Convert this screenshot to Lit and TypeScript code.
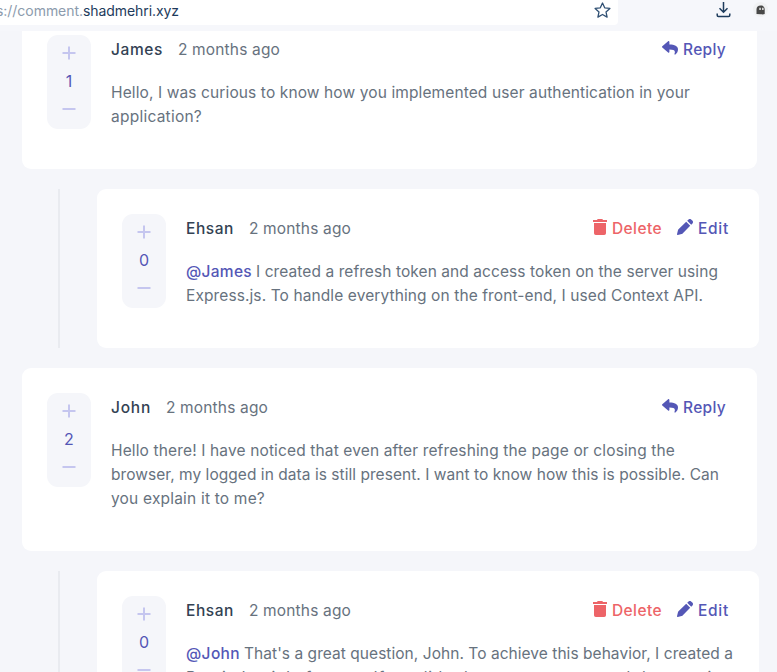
import { LitElement, html, css, svg, nothing } from "lit";
import { customElement, property, state, query } from "lit/decorators.js";

interface Line {
  text: string;
  width: number;
  mention?: string;
  mentionWidth?: number;
}

interface Comment {
  author: string;
  authorWidth: number;
  votes: number;
  own: boolean;
  lines: Line[];
}

const comments: Comment[] = [
  {
    author: "James",
    authorWidth: 52,
    votes: 1,
    own: false,
    lines: [
      { text: "Hello, I was curious to know how you implemented user authentication in your", width: 579 },
      { text: "application?", width: 91 },
    ],
  },
  {
    author: "Ehsan",
    authorWidth: 48,
    votes: 0,
    own: true,
    lines: [
      {
        mention: "@James",
        mentionWidth: 66,
        text: "I created a refresh token and access token on the server using",
        width: 462,
      },
      { text: "Express.js. To handle everything on the front-end, I used Context API.", width: 517 },
    ],
  },
  {
    author: "John",
    authorWidth: 40,
    votes: 2,
    own: false,
    lines: [
      { text: "Hello there! I have noticed that even after refreshing the page or closing the", width: 564 },
      { text: "browser, my logged in data is still present. I want to know how this is possible. Can", width: 608 },
      { text: "you explain it to me?", width: 154 },
    ],
  },
  {
    author: "Ehsan",
    authorWidth: 48,
    votes: 0,
    own: true,
    lines: [
      {
        mention: "@John",
        mentionWidth: 54,
        text: "That's a great question, John. To achieve this behavior, I created a",
        width: 489,
      },
      { text: "PersistLogin's feature. If a valid token was present and the user is", width: 535 },
    ],
  },
];

/** A run of text whose tracking is set so that it fills a given measure. */
@customElement("tracked-text")
export class TrackedText extends LitElement {
  static styles = css`
    :host {
      display: inline-block;
      white-space: nowrap;
    }
  `;
  @property() text = "";
  @property({ type: Number }) measure = 0;
  @state() private tracking = 0;
  @query("span") private run!: HTMLSpanElement;

  firstUpdated() {
    const natural = this.run.getBoundingClientRect().width;
    this.tracking = (this.measure - natural) / this.text.length;
  }

  render() {
    return html`<span style="letter-spacing:${this.tracking}px">${this.text}</span>`;
  }
}

const tracked = (text: string, measure: number) =>
  html`<tracked-text .text=${text} .measure=${measure}></tracked-text>`;

const replyIcon = html`<svg class="icon" width="16" height="14" viewBox="0 0 16 14">
  <path fill="currentColor" d="M.3 5.3 6.1.3c.5-.4 1.3-.1 1.3.6v2.6c5.2.1 8.6 1.4 8.6 5.1 0 2.2-1.2 3.9-2.6 4.9-.5.4-1.1-.1-.9-.7 1.3-3.6-.7-4.3-5.1-4.4v2.5c0 .7-.8 1-1.3.6L.3 6.5a.8.8 0 0 1 0-1.2Z"/>
</svg>`;

const deleteIcon = html`<svg class="icon" width="14" height="16" viewBox="0 0 14 16">
  <path fill="currentColor" d="M4.7 0h4.600l.7 1H14v2H0V1h4ZM1 4h12v10.200a1.800 1.800 0 0 1-1.800 1.800H2.800A1.800 1.800 0 0 1 1 14.200Z"/>
</svg>`;

const editIcon = html`<svg class="icon" width="16" height="16" viewBox="0 0 16 16">
  <path fill="currentColor" d="m9.200 2.800 4 4-7.600 7.600c-.3.300-.6.500-1 .6l-3.800.9c-.5.200-.9-.2-.8-.7l.9-3.800c.1-.4.3-.8.6-1.100ZM10.200 1.800l1.100-1.100a2.200 2.200 0 0 1 3.100 0l.9.9a2.200 2.200 0 0 1 0 3.100l-1.100 1.100Z"/>
</svg>`;

@customElement("comment-card")
export class CommentCard extends LitElement {
  static styles = css`
    :host {
      display: flex;
      box-sizing: border-box;
      gap: 20px;
      padding: 25px 25px 40px;
      border-radius: 9px;
      background: #fff;
      align-items: flex-start;
    }
    .votes {
      flex: none;
      width: 44px;
      height: 94px;
      border-radius: 11px;
      background: #f5f6fa;
      color: #5457b6;
      display: flex;
      flex-direction: column;
      align-items: center;
      box-sizing: border-box;
      padding-top: 11px;
    }
    .votes svg {
      display: block;
      fill: #c5c6ef;
    }
    .count {
      height: 42px;
      line-height: 43px;
      font-size: 16px;
    }
    .body {
      flex: 1;
      min-width: 0;
      padding-top: 1px;
    }
    .head {
      display: flex;
      align-items: center;
      height: 28px;
      margin-bottom: 17px;
      margin-right: 5px;
    }
    .name {
      font-weight: 500;
      color: #334253;
      margin-right: 15px;
    }
    .when {
      margin-right: auto;
    }
    .action {
      display: flex;
      align-items: center;
      color: #5457b6;
      font-weight: 500;
    }
    .danger {
      color: #ed6468;
      margin-right: 15px;
    }
    .reply {
      margin-right: 1px;
    }
    .icon {
      display: block;
      margin-right: 5px;
      margin-top: -4px;
    }
    .line {
      white-space: nowrap;
      height: 24px;
      display: flex;
      gap: 4px;
    }
    .mention {
      color: #5457b6;
      font-weight: 500;
    }
  `;
  @property({ attribute: false }) comment!: Comment;

  private action(label: string, width: number, icon: unknown, variant = "") {
    return html`<div class="action ${variant}">${icon}${tracked(label, width)}</div>`;
  }

  render() {
    const c = this.comment;
    return html`
      <div class="votes">
        <svg width="14" height="14" viewBox="0 0 14 14">
          ${svg`<path d="M6 .5h2V6h5.500v2H8v5.500H6V8H.5V6H6Z"/>`}
        </svg>
        <div class="count">${c.votes}</div>
        <svg width="14" height="14" viewBox="0 0 14 14"><path d="M.5 6h13v2H.5Z" /></svg>
      </div>
      <div class="body">
        <div class="head">
          <div class="name">${tracked(c.author, c.authorWidth)}</div>
          <div class="when">${tracked("2 months ago", 102)}</div>
          ${c.own
            ? [this.action("Delete", 50, deleteIcon, "danger"), this.action("Edit", 31, editIcon)]
            : this.action("Reply", 43, replyIcon, "reply")}
        </div>
        ${c.lines.map(
          (l) => html`<div class="line">
            ${l.mention
              ? html`<span class="mention">${tracked(l.mention, l.mentionWidth ?? 0)}</span>`
              : nothing}${tracked(l.text, l.width)}
          </div>`
        )}
      </div>
    `;
  }
}

@customElement("app-root")
export class AppRoot extends LitElement {
  static styles = css`
    :host {
      display: flex;
      flex-direction: column;
      width: 777px;
      height: 672px;
      overflow: hidden;
      background: #f5f6fa;
      color: #67727e;
      font: 15.5px/24px Inter, sans-serif;
    }
    .toolbar {
      flex: none;
      height: 31px;
      display: flex;
      background: #f6f7fb;
      color: #1d3b5c;
    }
    .address {
      width: 618px;
      height: 25px;
      box-sizing: border-box;
      padding-right: 7px;
      background: #fff;
      border-bottom-right-radius: 4px;
      display: flex;
      justify-content: space-between;
      overflow: hidden;
      font: 14px/21px Inter, sans-serif;
    }
    .url {
      display: flex;
      margin-left: -4px;
    }
    .dim {
      color: #8c9bad;
    }
    .star {
      margin-top: 2px;
    }
    .download {
      margin: 2px 0 0 98px;
    }
    .ghost {
      margin: 2px 0 0 21px;
    }
    .page {
      flex: 1;
      min-height: 0;
      overflow: hidden;
      padding: 0 18px 0 22px;
    }
    .thread {
      display: flex;
      flex-direction: column;
      gap: 20px;
      margin-top: -21px;
    }
    .top {
      width: 735px;
    }
    .nested {
      display: flex;
      margin-left: 36px;
      width: 701px;
      box-sizing: border-box;
      border-left: 2px solid #e9ebf0;
      padding-left: 37px;
    }
    .nested comment-card {
      flex: 1;
    }
  `;

  render() {
    return html`
      <div class="toolbar">
        <div class="address">
          <div class="url">
            <span class="dim">${tracked("s://comment.", 87)}</span>${tracked("shadmehri.xyz", 96)}
          </div>
          <svg class="star" width="17" height="17" viewBox="0 0 17 17">
            <path
              d="m8.500 1 2.200 4.800 5.200.6-3.900 3.500 1.100 5.200-4.600-2.600-4.600 2.600L5 9.900 1.100 6.400l5.200-.6Z"
              fill="none"
              stroke="#315174"
              stroke-width="1.300"
              stroke-linejoin="round"
            />
          </svg>
        </div>
        <svg class="download" width="16" height="16" viewBox="0 0 16 16">
          <path
            d="M7.500 0v10M3.500 6.200l4 4 4-4M1.200 11.500v1.700c0 .8.4 1.200 1.200 1.200h10.200c.8 0 1.200-.4 1.200-1.200v-1.700"
            fill="none"
            stroke="#1d3b5c"
            stroke-width="1.500"
          />
        </svg>
        <svg class="ghost" width="16" height="16" viewBox="0 0 16 16">
          <circle cx="7.500" cy="7.500" r="7.500" fill="#f0f1f3" />
          <path
            d="M3.500 12V7.500c0-2.500 1.600-4 4.200-4s4 1.500 4 4V12c-1.400.6-2.600.3-4.200.3Z"
            fill="#484848"
          />
          <path d="M6.300 5.800h1.500v2.300H6.300ZM9.100 5.800h1.500v2.300H9.100Z" fill="#e4e4e4" />
        </svg>
      </div>
      <div class="page">
        <div class="thread">
          ${comments.map((c) =>
            c.own
              ? html`<div class="nested"><comment-card .comment=${c}></comment-card></div>`
              : html`<comment-card class="top" .comment=${c}></comment-card>`
          )}
        </div>
      </div>
    `;
  }
}
